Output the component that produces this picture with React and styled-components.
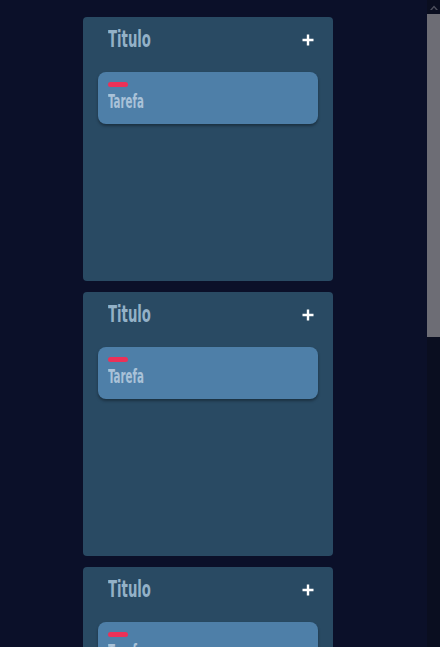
import React from 'react';
import styled, { createGlobalStyle } from 'styled-components';

const GlobalStyle = createGlobalStyle`
    html, body { margin: 0; background: #0b1029; }
    body {
        font-family: "DejaVu Sans Condensed", "DejaVu Sans", sans-serif;
    }
`;

const Board = styled.div`
    display: flex;
    flex-direction: column;
    align-items: flex-start;
    gap: 11px;
    padding: 17px 13px 134px 83px;
`;

const Column = styled.section`
    width: 250px;
    height: 264px;
    background: #294a63;
    border-radius: 4px;
    box-sizing: border-box;
    padding: 0 15px;
`;

const Header = styled.div`
    display: flex;
    align-items: center;
    justify-content: space-between;
    height: 44px;
    padding: 0 3px 0 10px;
    margin-bottom: 11px;
`;

const Title = styled.h2`
    margin: 0;
    display: inline-block;
    font-size: 23px;
    font-weight: bold;
    color: #93b1c7;
    transform: scaleX(0.64);
    transform-origin: left center;
    white-space: nowrap;
`;

const AddButton = styled.button`
    background: transparent;
    border: none;
    padding: 0;
    width: 14px;
    height: 14px;
    display: flex;
    align-items: center;
    justify-content: center;
    cursor: pointer;
    margin-top: 2px;
`;

const Card = styled.div`
    background: #4e7fa8;
    border-radius: 8px;
    height: 52px;
    box-sizing: border-box;
    padding: 10px 10px 0;
    box-shadow: 0 2px 3px rgba(0, 0, 0, 0.35);
`;

const Tag = styled.div`
    width: 20px;
    height: 5px;
    border-radius: 3px;
    background: ${p => p.color};
`;

const CardText = styled.div`
    margin-top: 3px;
    display: inline-block;
    font-size: 19px;
    font-weight: bold;
    color: #a9c2d8;
    transform: scaleX(0.6);
    transform-origin: left center;
    white-space: nowrap;
`;

// fake page scrollbar, drawn over the right edge
const ScrollTrack = styled.div`
    position: fixed;
    top: 0;
    right: 0;
    width: 13px;
    height: 100vh;
    background: #0a0e20;
`;

const ScrollArrow = styled.div`
    height: 14px;
    display: flex;
    align-items: center;
    justify-content: center;
`;

const ScrollThumb = styled.div`
    height: 323px;
    background: #6d6d75;
`;

const Plus = () => (
    <svg width="12" height="12" viewBox="0 0 12 12">
        <path d="M6 0.5v11M0.5 6h11" stroke="#fff" strokeWidth="2.4" />
    </svg>
);

const columns = [
    { title: 'Titulo', tasks: [{ text: 'Tarefa', tag: '#ec3158' }] },
    { title: 'Titulo', tasks: [{ text: 'Tarefa', tag: '#ec3158' }] },
    { title: 'Titulo', tasks: [{ text: 'Tarefa', tag: '#ec3158' }] },
    { title: 'Titulo', tasks: [{ text: 'Tarefa', tag: '#ec3158' }] },
];

export default function App() {
    return (
        <>
            <GlobalStyle />
            <Board>
                {columns.map((col, i) => (
                    <Column key={i}>
                        <Header>
                            <Title>{col.title}</Title>
                            <AddButton><Plus /></AddButton>
                        </Header>
                        {col.tasks.map((t, j) => (
                            <Card key={j}>
                                <Tag color={t.tag} />
                                <CardText>{t.text}</CardText>
                            </Card>
                        ))}
                    </Column>
                ))}
            </Board>
            <ScrollTrack>
                <ScrollArrow>
                    <svg width="8" height="6" viewBox="0 0 8 6">
                        <path d="M0 6L4 1.5L8 6H6L4 3.6L2 6Z" fill="#4d4f5c" />
                    </svg>
                </ScrollArrow>
                <ScrollThumb />
            </ScrollTrack>
        </>
    );
}
